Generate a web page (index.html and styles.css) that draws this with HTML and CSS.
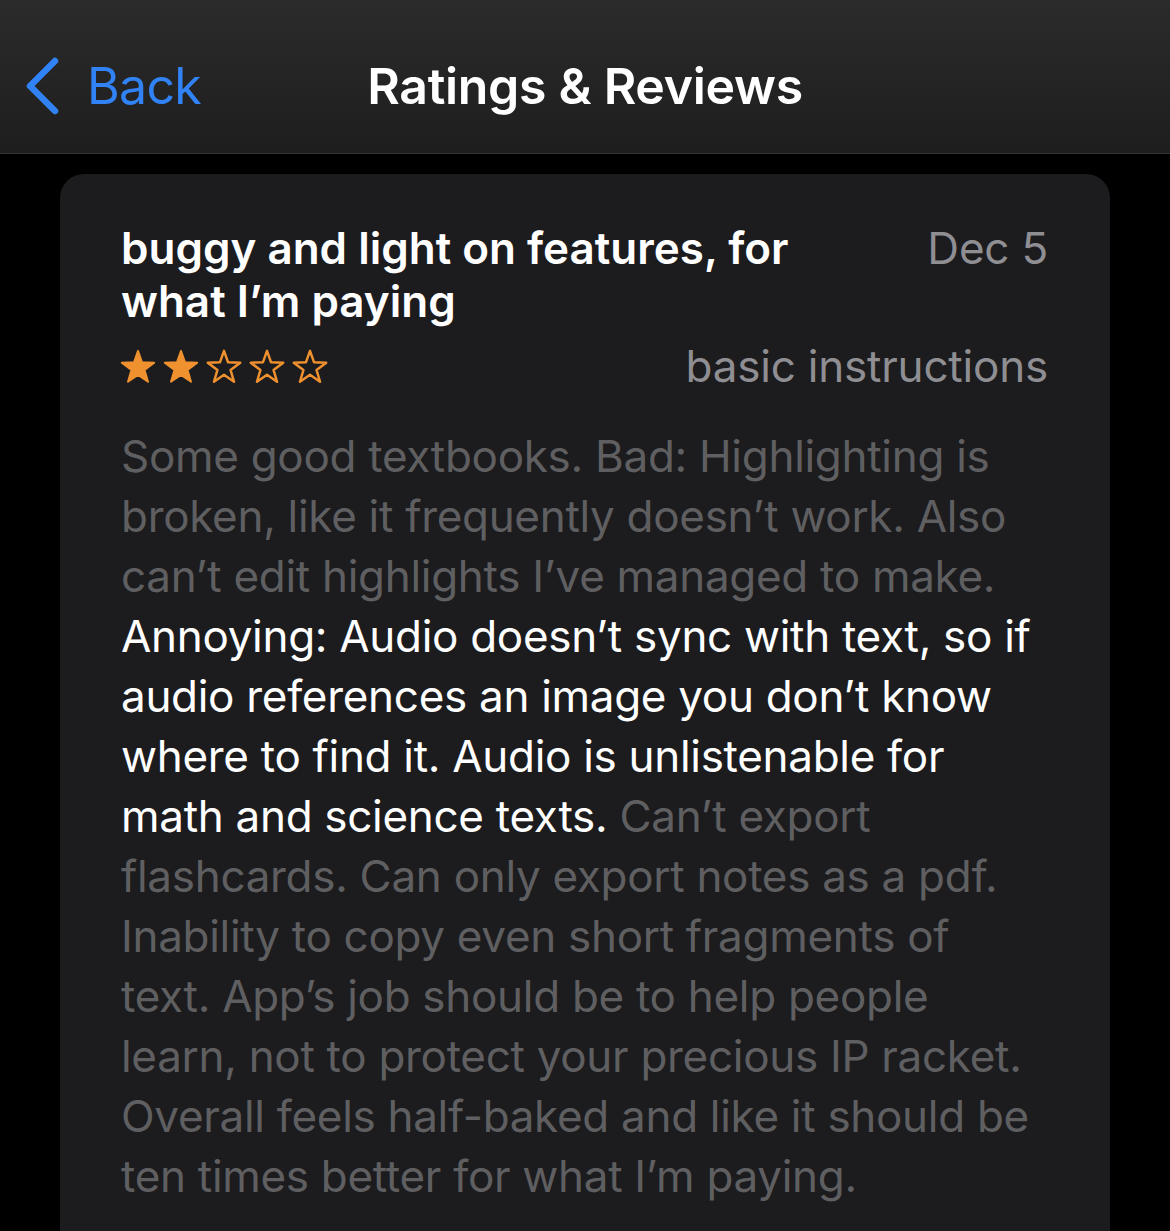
FILE: index.html
```html
<!DOCTYPE html>
<html lang="en">
<head>
    <meta charset="UTF-8">
    <meta name="viewport" content="width=device-width, initial-scale=1.0">
    <title>Ratings &amp; Reviews</title>
    <link rel="stylesheet" href="styles.css">
</head>

<body>
    <header class="nav-bar">
        <a class="back-link" href="#">
            <svg class="back-chevron" width="36" height="60" viewBox="0 0 36 60">
                <polyline points="30,5 5,30 30,55" fill="none" stroke="#3183f5" stroke-width="6.5" stroke-linecap="round" stroke-linejoin="round"/>
            </svg>
            <span>Back</span>
        </a>
        <h1 class="nav-title">Ratings &amp; Reviews</h1>
    </header>

    <main class="content">
        <article class="review-card">
            <div class="review-head">
                <h2 class="review-title">buggy and light on features, for what I’m paying</h2>
                <span class="review-date">Dec 5</span>
            </div>
            <div class="review-meta">
                <div class="stars">
                    <svg class="star filled" viewBox="-2 -2 40 39"><path d="M18,1 L22.29,13.09 L35.12,13.44 L24.94,21.26 L28.58,33.56 L18,26.3 L7.42,33.56 L11.06,21.26 L0.88,13.44 L13.71,13.09 Z"/></svg>
                    <svg class="star filled" viewBox="-2 -2 40 39"><path d="M18,1 L22.29,13.09 L35.12,13.44 L24.94,21.26 L28.58,33.56 L18,26.3 L7.42,33.56 L11.06,21.26 L0.88,13.44 L13.71,13.09 Z"/></svg>
                    <svg class="star" viewBox="-2 -2 40 39"><path d="M18,1 L22.29,13.09 L35.12,13.44 L24.94,21.26 L28.58,33.56 L18,26.3 L7.42,33.56 L11.06,21.26 L0.88,13.44 L13.71,13.09 Z"/></svg>
                    <svg class="star" viewBox="-2 -2 40 39"><path d="M18,1 L22.29,13.09 L35.12,13.44 L24.94,21.26 L28.58,33.56 L18,26.3 L7.42,33.56 L11.06,21.26 L0.88,13.44 L13.71,13.09 Z"/></svg>
                    <svg class="star" viewBox="-2 -2 40 39"><path d="M18,1 L22.29,13.09 L35.12,13.44 L24.94,21.26 L28.58,33.56 L18,26.3 L7.42,33.56 L11.06,21.26 L0.88,13.44 L13.71,13.09 Z"/></svg>
                </div>
                <span class="review-author">basic instructions</span>
            </div>
            <p class="review-body"><span class="dim">Some good textbooks. Bad: Highlighting is broken, like it frequently doesn’t work. Also can’t edit highlights I’ve managed to make.</span> Annoying: Audio doesn’t sync with text, so if audio references an image you don’t know where to find it. Audio is unlistenable for math and science texts. <span class="dim">Can’t export flashcards. Can only export notes as a pdf. Inability to copy even short fragments of text. App’s job should be to help people learn, not to protect your precious IP racket. Overall feels half-baked and like it should be ten times better for what I’m paying.</span></p>
        </article>
    </main>
</body>

</html>
```

FILE: styles.css
```css
/* General styles */
body {
    font-family: Inter, "Noto Sans", "Liberation Sans", sans-serif;
    margin: 0;
    padding: 0;
    background-color: #000;
    color: #fff;
    height: 1231px;
    overflow: hidden;
}

/* Navigation bar */
.nav-bar {
    height: 153px;
    background: linear-gradient(#2b2b2b, #1e1e1e);
    border-bottom: 1px solid #353535;
    display: flex;
    align-items: center;
    justify-content: center;
    position: relative;
}

.back-link {
    position: absolute;
    left: 25px;
    top: 56px;
    display: flex;
    align-items: center;
    gap: 26px;
    color: #3183f5;
    text-decoration: none;
    font-size: 50px;
    letter-spacing: -0.7px;
}

.back-chevron {
    display: block;
}

.nav-title {
    margin: 0;
    font-size: 50px;
    font-weight: 600;
    letter-spacing: -0.3px;
    padding-top: 18px;
}

/* Review card */
.content {
    padding: 20px 60px 0;
}

.review-card {
    background-color: #1c1c1e;
    border-radius: 24px;
    padding: 48px 62px 60px 61px;
}

.review-head {
    display: flex;
    align-items: baseline;
    justify-content: space-between;
    gap: 40px;
}

.review-title {
    margin: 0;
    font-size: 44px;
    line-height: 53px;
    font-weight: 600;
    letter-spacing: 0;
    max-width: 740px;
}

.review-date,
.review-author {
    font-size: 44px;
    line-height: 53px;
    color: #8e8e93;
    letter-spacing: -0.2px;
}

.review-meta {
    display: flex;
    align-items: center;
    justify-content: space-between;
    margin-top: 12px;
}

.stars {
    display: flex;
    gap: 5px;
    margin-left: -2px;
}

.star {
    width: 38px;
    height: 37px;
    display: block;
}

.star path {
    fill: none;
    stroke: #f0912f;
    stroke-width: 2.6;
    stroke-linejoin: round;
}

.star.filled path {
    fill: #f0912f;
    stroke-width: 2;
}

.review-body {
    margin: 33px 0 0;
    font-size: 44px;
    line-height: 60px;
    letter-spacing: -0.3px;
    color: #fff;
}

.dim {
    color: #5f5f61;
}
```
